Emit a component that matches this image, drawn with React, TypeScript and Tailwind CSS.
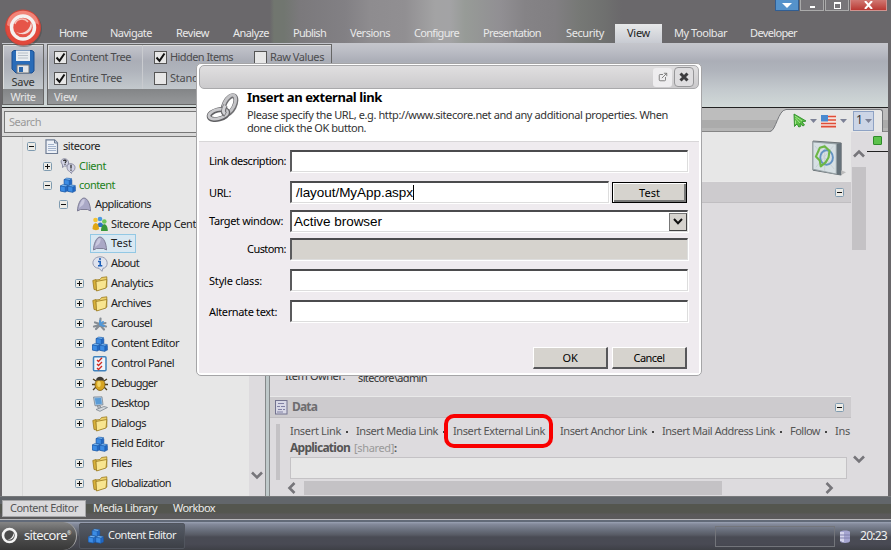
import React, { useLayoutEffect, useRef, useState } from "react";
import { ExternalLink } from "lucide-react";

/** Single line label whose tracking is adjusted so that it fills `w` pixels. */
function T({ c, w, className = "", up = true }: { c: string; w: number; className?: string; up?: boolean }) {
  const ref = useRef<HTMLSpanElement>(null);
  const [ls, setLs] = useState(0);
  useLayoutEffect(() => {
    if (ref.current) setLs((w - ref.current.getBoundingClientRect().width) / c.length);
  }, []);
  return (
    <span ref={ref} className={"shrink-0 whitespace-pre " + (up ? "-mt-px mb-px " : "") + className} style={{ letterSpacing: ls }}>
      {c}
    </span>
  );
}

function Toggle({ open = false }: { open?: boolean }) {
  return (
    <svg width="9" height="9" viewBox="0 0 9 9" className="shrink-0">
      <rect x=".5" y=".5" width="8" height="8" rx="1" fill="#ecebe6" stroke="#7f9bb0" />
      <path d={open ? "M2 4.5h5" : "M2 4.5h5M4.5 2v5"} stroke="#111" />
    </svg>
  );
}

function Cubes() {
  return (
    <g strokeWidth=".5" stroke="#1d56a0">
      {[[4.2, 0.5], [0.3, 7], [7.8, 7.3]].map(([x, y]) => (
        <g key={x} transform={`translate(${x} ${y})`}>
          <path d="M0 2 5 1 7.700 2.200V6.800L5 8 0 7Z" fill="#2168c4" />
          <path d="M0 2 2.500 .5 7.700 1.200 5 2.800Z" fill="#79b9f6" />
          <path d="M0 2 5 2.800V8L0 7Z" fill="#3c8ce4" />
        </g>
      ))}
    </g>
  );
}

function Icon({ k }: { k: string }) {
  return (
    <svg width="16" height="16" viewBox="0 0 16 16" className="shrink-0">
      {k === "doc" && (
        <g>
          <path d="M2 .8h8.500l3 3V14.500H2Z" fill="#edf1f7" stroke="#6f7d94" strokeWidth="1.200" />
          <path d="M10.500 1v3h3" fill="#c3cfe0" stroke="#6f7d94" />
          <path d="M4 5.500h6M4 7.500h8M4 9.500h8M4 11.500h8" stroke="#a3b3cc" />
        </g>
      )}
      {k === "client" && (
        <g fill="#d2d3e4" stroke="#7c7d97" strokeWidth=".8">
          <path d="M1 4c0-5 8-4 7.500 1 0 3-3 3.500-4 3L2.500 9.500V7Z" />
          <path d="M7 9c0-5 8-4 8 .5 0 3-2 4-3 4l-.5 2-2-2C8 13 7 11 7 9Z" />
          <path d="M3.500 3c.5-1.600 3-1 2.500.5L5 4.800m0 1v1M11 6.800v3.700m0 1v1.200" fill="none" stroke="#222" strokeWidth="1.200" />
        </g>
      )}
      {k === "cubes" && <Cubes />}
      {k === "app" && (
        <g>
          <path d="M1.500 14C1.500 8 4.500 1 8 1s6.500 6.500 6.500 13l-3-1.500H4.500Z" fill="#a9a8c6" stroke="#77768f" strokeWidth=".9" />
          <path d="M3 11C4 6 6 2 8 2c1 0 1 3-1 6Z" fill="#c9c8de" />
        </g>
      )}
      {k === "users" && (
        <g>
          <circle cx="8" cy="3" r="2.300" fill="#4c9ae0" />
          <path d="M5 11c0-6 6.500-6 6.500 0Z" fill="#2f75c4" />
          <circle cx="3.500" cy="4" r="2.300" fill="#f4c433" />
          <path d="M.5 13C.5 5 7 5 7 13c-1 1.500-5 1.500-6.500 0Z" fill="#e0a713" />
          <circle cx="12.300" cy="5.500" r="2.300" fill="#6cc95a" />
          <path d="M9 15c0-9 6.800-9 6.800 0Z" fill="#37983a" />
        </g>
      )}
      {k === "about" && (
        <g>
          <path d="M8 .8c9 0 9 11 3 11.500l-1 3-3-3C-1.500 12-1 1 8 .8Z" fill="#dfe3ee" stroke="#8b91a8" strokeWidth=".9" />
          <path d="M6 5.500H8.200v4M6 9.800h4.300" stroke="#1c5fb8" strokeWidth="1.600" fill="none" />
          <circle cx="8" cy="3" r="1.100" fill="#1c5fb8" />
        </g>
      )}
      {k === "folder" && (
        <g stroke="#9a7a1e" strokeWidth=".8">
          <path d="M.8 4.500 4 3.500 5 4.500V14L2 13.500Z" fill="#d9b23a" />
          <path d="M4 4 8 3.500 9.500 1.500 14.800.8V11L5 14.500Z" fill="#ecd06a" />
          <path d="M4 5.500 14.800 3.500 14 12 4.500 15Z" fill="#f8e590" />
        </g>
      )}
      {k === "carousel" && (
        <g strokeLinecap="round">
          <path d="M8.500 2.500 8 8M8 8 3 6.500M8 9l-4 4M8 9l4 4.500M8 8l5.500-1M2 10.500 8 9l6 1.500" stroke="#868d94" strokeWidth="2.200" />
          <path d="M8 8.500 11 6M8 8.500l4 1.500M8 5v3" stroke="#4f97d8" strokeWidth="2" />
        </g>
      )}
      {k === "panel" && (
        <g>
          <rect x="1.500" y=".8" width="12.500" height="14" rx="1" fill="#eef4fa" stroke="#3f82bd" strokeWidth="1.500" />
          <path d="m5 4 1.500 1.500L10 1.800M5 8l1.500 1.500L10 6M5 12l1.500 1.500L10 10" fill="none" stroke="#cf2a22" strokeWidth="1.300" />
        </g>
      )}
      {k === "bug" && (
        <g>
          <path d="M1 3l3 2M15 3l-3 2M0 8.500h16M1 14l3-3M15 14l-3-3" stroke="#4b3b18" strokeWidth="1.300" />
          <ellipse cx="8" cy="8.700" rx="5" ry="5.800" fill="#d7a422" stroke="#7c5b10" strokeWidth=".8" />
          <path d="M4 4.500C4-.5 12-.5 12 4.500Z" fill="#3e3a34" />
          <ellipse cx="7" cy="8" rx="1.800" ry="3" fill="#f3d462" />
        </g>
      )}
      {k === "desktop" && (
        <g stroke="#7d8791" strokeWidth=".8">
          <path d="M1.500 1 10 .8l1 8-8 1Z" fill="#a9c9e6" />
          <path d="M2.800 2.200 9 2l.8 5.800-5.800.8Z" fill="#5a9bd5" stroke="none" />
          <path d="m5 10 3-.5 1 2L7 13Z" fill="#b6bcc2" />
          <path d="m4 13.500 8-3 3.500 1L8 15.300Z" fill="#d4d8dc" />
        </g>
      )}
    </svg>
  );
}

type Node = [string, number, number, string, string];
// label, indent, label width, icon, state (o: open, c: closed, -: leaf)
const nodes: Node[] = [
  ["sitecore", 25, 37, "doc", "o"],
  ["Client", 41, 27, "client", "c"],
  ["content", 41, 36, "cubes", "o"],
  ["Applications", 57, 56, "app", "o"],
  ["Sitecore App Center", 73, 95, "users", "-"],
  ["Test", 73, 21, "app", "-"],
  ["About", 73, 28, "about", "-"],
  ["Analytics", 73, 42, "folder", "c"],
  ["Archives", 73, 40, "folder", "c"],
  ["Carousel", 73, 41, "carousel", "c"],
  ["Content Editor", 73, 68, "cubes", "c"],
  ["Control Panel", 73, 63, "panel", "c"],
  ["Debugger", 73, 46, "bug", "c"],
  ["Desktop", 73, 38, "desktop", "c"],
  ["Dialogs", 73, 35, "folder", "c"],
  ["Field Editor", 73, 53, "cubes", "-"],
  ["Files", 73, 21, "folder", "c"],
  ["Globalization", 73, 60, "folder", "c"],
  ["", 73, 0, "app", "-"],
];

function Tree() {
  return (
    <div className="w-[247px] shrink-0 overflow-hidden bg-[#e7e7e7] bg-[linear-gradient(90deg,transparent_20px,#d9d9d9_20px,#d9d9d9_21px,transparent_21px)]">
      {nodes.map(([label, pad, w, icon, st], i) => (
        <div
          key={i}
          className={"flex items-center text-[#222] " + (i < 5 ? "h-[19.400px]" : "h-5")}
          style={{ paddingLeft: pad }}
        >
          <span className="flex w-[15px] shrink-0">{st !== "-" && <Toggle open={st === "o"} />}</span>
          <span
            className={
              "flex h-[19px] shrink-0 items-center gap-[3px] border pr-[3px] pl-px " +
              (label === "Test" ? "border-[#93c8e4] bg-[#d9e8f2]" : "border-transparent") +
              (label === "Client" || label === "content" ? " text-[#1c8220]" : "")
            }
          >
            <Icon k={icon} />
            {label && <T c={label} w={w} />}
          </span>
        </div>
      ))}
    </div>
  );
}

function Check({ on, label, w }: { on: boolean; label: string; w: number }) {
  return (
    <div className="flex h-[13px] items-center gap-[3px]">
      <span className="flex h-[13px] w-[13px] shrink-0 border border-[#555] bg-[#e7e7e7]">
        {on && (
          <svg width="11" height="11" viewBox="0 0 11 11">
            <path d="M1.500 5.500 4.500 8.800 9.500 1.500" fill="none" stroke="#111" strokeWidth="2" />
          </svg>
        )}
      </span>
      <T c={label} w={w} className="text-[#4c4c4e]" />
    </div>
  );
}

function Chevron({ d }: { d: string }) {
  return (
    <svg width="12" height="12" viewBox="0 0 12 12" className="shrink-0">
      <path d={d} fill="none" stroke="#76757a" strokeWidth="2.600" />
    </svg>
  );
}
const DOWN = "M1 3.500 6 8.500 11 3.500";
const UP = "M1 8.500 6 3.500 11 8.500";
const LEFT = "M8.500 1 3.500 6 8.500 11";
const RIGHT = "M3.500 1 8.500 6 3.500 11";

const tabs: [string, number, number][] = [
  ["Home", 28, 23],
  ["Navigate", 42, 24],
  ["Review", 33, 24],
  ["Analyze", 36, 24],
  ["Publish", 33, 24],
  ["Versions", 40, 24],
  ["Configure", 45, 24],
  ["Presentation", 58, 25],
  ["Security", 38, 11],
];

function Header() {
  return (
    <header className="flex h-[43px] shrink-0 flex-col bg-[linear-gradient(90deg,#6a686b_0,#6a686b_270px,#71766f_274px,#717670_284px,#7b797c_300px,#828084_345px,#8e8c8f_370px,#918f92_405px,#a3a3a4_435px,#a3a3a5_450px,#979b97_465px,#918f93_500px,#858386_525px,#817f82_555px,#767875_580px,#6f706f_605px,#6a686b_622px)]">
      <div className="flex h-[11px] shrink-0 justify-end gap-px pr-[4px]">
        <span className="flex w-[24px] items-center justify-center border border-t-0 border-[#315e93] bg-[#5592ca]">
          <svg width="10" height="5"><path d="M0 0H10L5 5Z" fill="#fff" /></svg>
        </span>
        <span className="flex w-[24px] items-end justify-center border border-t-0 border-[#aaa] bg-[#777579] pb-[2px]">
          <i className="h-[2px] w-[5px] bg-white" />
        </span>
        <span className="flex w-[24px] items-center justify-center border border-t-0 border-[#aaa] bg-[#777579]">
          <i className="h-[7px] w-[7px] border border-t-2 border-white" />
        </span>
        <span className="flex w-[37px] items-center justify-center border border-t-0 border-[#d0928e] bg-gradient-to-b from-[#d07772] to-[#b93733]">
          <svg width="9" height="8"><path d="M1 0 8 8M8 0 1 8" stroke="#fff" strokeWidth="2" /></svg>
        </span>
      </div>
      <nav className="flex grow items-end pl-[59px] text-[#e9e9e9]">
        {tabs.map(([t, w, gap]) => (
          <span key={t} className="flex h-[20px] items-center" style={{ marginRight: gap }}>
            <T c={t} w={w} />
          </span>
        ))}
        <span className="flex h-[19px] w-[47px] items-center bg-gradient-to-b from-[#e7e8e9] to-[#c8cbd2] pl-[12px] text-[#222]">
          <T c="View" w={23} />
        </span>
        <span className="flex h-[20px] items-center gap-[23px] pl-[12px]">
          <T c="My Toolbar" w={53} />
          <T c="Developer" w={47} />
        </span>
      </nav>
    </header>
  );
}

function Ribbon() {
  return (
    <div className="flex h-[65px] shrink-0 gap-[3px] border-b border-[#222] bg-[linear-gradient(#c5c6cc,#bbbdc5_8px,#abaeb7_18px,#b0b4bc_28px,#c3c9cd_46px,#d1d9d8)] pt-px pb-[2px]">
      <div className="flex w-[42px] flex-col border border-[#666] shadow-[inset_1px_1px_#ddd]">
        <div className="flex grow flex-col items-center justify-end">
          <svg width="24" height="25" viewBox="0 0 24 25" className="shrink-0">
            <path d="M1 3 3 1.500H21L23 3V22L21 24H5L1 20Z" fill="#2a6cb8" stroke="#1c4f91" />
            <path d="M5 1.500H19V12H5Z" fill="#e9edf0" />
            <path d="M7 4H17M7 6.500H17M7 9H17" stroke="#b8c0c8" />
            <path d="M6 16H18V24H6Z" fill="#e2e5e8" stroke="#777" />
            <path d="M8 18h4v5H8Z" fill="#2b67ac" />
          </svg>
          <T c="Save" w={23} up={false} className="leading-[15px] text-[#333]" />
        </div>
        <div className="flex h-[15px] shrink-0 items-center justify-center bg-gradient-to-b from-[#838587] to-[#96989a] text-[#e6e6e6]">
          <T c="Write" w={25} up={false} />
        </div>
      </div>
      <div className="flex w-[285px] flex-col border border-[#666] shadow-[inset_1px_1px_#ddd]">
        <div className="flex grow pl-[6px]">
          <div className="flex w-[89px] flex-col gap-[8px] border-r border-[#c9cbcf] pt-[6px]">
            <Check on label="Content Tree" w={61} />
            <Check on label="Entire Tree" w={52} />
          </div>
          <div className="flex w-[100px] flex-col gap-[8px] pt-[6px] pl-[11px]">
            <Check on label="Hidden Items" w={63} />
            <Check on={false} label="Standard Fields" w={76} />
          </div>
          <div className="flex pt-[6px] pl-[11px]">
            <Check on={false} label="Raw Values" w={54} />
          </div>
        </div>
        <div className="flex h-[15px] shrink-0 items-center bg-gradient-to-b from-[#838587] to-[#96989a] pl-[6px] text-[#e6e6e6]">
          <T c="View" w={23} up={false} />
        </div>
      </div>
    </div>
  );
}

function SectionBar({ title }: { title?: string }) {
  return (
    <div className="flex h-[22px] shrink-0 items-center border-t border-b border-t-[#e9e9e9] border-b-[#c0bec1] bg-[#cdcbce] pr-[7px] pl-[5px]">
      {title && (
        <>
          <svg width="13" height="15" className="mr-[4px]">
            <rect x=".5" y=".5" width="11.500" height="13.500" fill="#d8d8e6" stroke="#73738f" />
            <path d="M3 3.500h6M2 6.500h3M6 6.500h4M3 9.500h4M2 12h6M8 9.500h2" stroke="#8080a4" />
          </svg>
          <T c={title} w={25} className="text-[12px] font-bold text-[#6e6d70]" />
        </>
      )}
      <span className="ml-auto flex"><Toggle open /></span>
    </div>
  );
}

const Caret = () => (
  <svg width="7" height="4" className="shrink-0"><path d="M0 0H7L3.500 4Z" fill="#7c8196" /></svg>
);

const links: [string, number][] = [
  ["Insert Link", 51],
  ["Insert Media Link", 82],
  ["Insert External Link", 92],
  ["Insert Anchor Link", 87],
  ["Insert Mail Address Link", 113],
  ["Follow", 30],
  ["Ins", 15],
];

function Editor() {
  return (
    <main className="flex w-[618px] flex-col bg-[#dddbde]">
      <div className="flex h-[24px] shrink-0 justify-end bg-[linear-gradient(#bdbdbd_0_50%,#ababab_50%_85%,#b5b5b5_85%)] shadow-[inset_0_-1px_#858585]">
        <svg width="27" height="24" className="shrink-0">
          <path d="M0 24V23.500C6 23 8 2 16 1.500H27V24Z" fill="#e7e7e7" />
          <path d="M0 23.500C6 23 8 2 16 1.500H27" fill="none" stroke="#76787c" />
        </svg>
        <div className="mt-px mr-[5px] flex w-[86px] items-center rounded-tr-[3px] border-t border-r border-[#76787c] bg-[#e7e7e7]">
          <svg width="14" height="16" viewBox="0 0 14 16" className="mr-[3px] -ml-[4px] shrink-0">
            <path d="M1 1 13 8 9 9 11.500 12 10 13 7 10.500 7.500 13.500 5.800 14 4 11 1.500 13.500Z" fill="#5bbf45" stroke="#2f8d2a" strokeWidth=".9" />
            <path d="M2 3 9 8M2.500 5 7 10M2.500 7.500V11" stroke="#a3e58c" fill="none" />
          </svg>
          <Caret />
          <svg width="16" height="13" className="mr-[3px] ml-[4px] shrink-0">
            <rect width="15" height="12.500" fill="#f4e4df" />
            <path d="M0 1.500h15M0 5h15M0 8.500h15M0 11.700h15" stroke="#df4d38" strokeWidth="1.700" />
            <rect width="7" height="6.500" fill="#4a8ad0" />
          </svg>
          <Caret />
          <span className="ml-[6px] flex h-[20px] w-[21px] shrink-0 items-center gap-[2px] border border-[#8ea2c4] bg-[#ccd5e6] pl-[2px] text-[#333]">
            <span className="-mt-[4px] text-[12px]">1</span> <Caret />
          </span>
        </div>
      </div>
      <div className="flex min-h-0 grow">
        <div className="flex w-[581px] flex-col overflow-hidden">
          <div className="flex h-[49px] shrink-0 justify-end bg-[#e7e7e7] pt-[8px] pr-[4px]">
            <svg width="35" height="38" viewBox="0 0 36 39">
              <path d="M1 1 30 3V36L1 31Z" fill="#8b949a" stroke="#6a7276" />
              <path d="m25 4 5-1V36l-5-1Z" fill="#66727a" />
              <path d="M1 2 25 4V35L1 30Z" fill="#d7e0e4" stroke="#95a0a4" />
              <path d="m3 6 20 24M22 6 4 28M13 4v28" stroke="#c6d0d5" />
              <ellipse cx="15" cy="18" rx="6.500" ry="7.500" fill="none" stroke="#6493c3" strokeWidth="2" />
              <path d="M8 8 13 6.500 18 11 17 18 14 23 9 27 8 21 4 17Z" fill="none" stroke="#6db746" strokeWidth="2.200" strokeLinejoin="round" />
              <path d="m30 31 5 2-5 3Z" fill="#bbb" />
            </svg>
          </div>
          <SectionBar />
          <div className="flex grow items-end gap-[13px] pb-[11px] pl-[15px] text-[#333]">
            <T c="Item Owner:" w={60} up={false} className="leading-[19px]" />
            <T c="sitecore\admin" w={69} up={false} className="leading-[15px]" />
          </div>
          <SectionBar title="Data" />
          <div className="flex h-[61px] shrink-0 pt-[6px] pl-[6px] text-[#555]">
            <div className="mr-[10px] h-[56px] w-[4px] shrink-0 bg-[#c4c2c5]" />
            <div className="flex flex-col">
              <div className="flex h-[15px] items-center">
                {links.map(([l, w], i) => (
                  <React.Fragment key={l}>
                    {i > 0 && (
                      <span className="flex w-[15px] shrink-0 justify-center pr-[3px]">
                        <i className="h-[2px] w-[2px] bg-[#444]" />
                      </span>
                    )}
                    <T c={l} w={w} />
                  </React.Fragment>
                ))}
              </div>
              <div className="flex h-[18px] items-center gap-[4px]">
                <T c="Application" w={60} className="text-[12px] font-bold text-[#555]" />
                <span className="-mt-px mb-px flex">
                  <T c="[shared]" w={40} up={false} className="text-[#999]" /><b>:</b>
                </span>
              </div>
              <div className="h-[22px] w-[557px] shrink-0 border border-[#c4c2c5] bg-[#e7e7e7]" />
            </div>
          </div>
          <div className="flex h-[17px] shrink-0 items-center pl-[16px]">
            <Chevron d={LEFT} />
            <div className="mr-[101px] ml-[6px] h-[14px] w-[418px] shrink-0 bg-[#c4c2c5]" />
            <Chevron d={RIGHT} />
          </div>
        </div>
        <div className="flex w-[16px] flex-col items-center pt-[16px]">
          <Chevron d={UP} />
          <div className="mt-[7px] h-[83px] w-[14px] bg-[#c4c2c5]" />
          <div className="mt-auto mb-[31px] flex"><Chevron d={DOWN} /></div>
        </div>
        <div className="flex h-[20px] w-[21px] justify-center border-b border-[#222] pt-[4px]">
          <i className="h-[9px] w-[9px] rounded-[1px] border border-[#2f8b2a] bg-[#5cc24c]" />
        </div>
      </div>
    </main>
  );
}

const FIELD = "h-[22px] shrink-0 border-t-2 border-l-2 border-r border-b border-t-[#4b4b4d] border-l-[#5b5b5d] border-r-[#ddd] border-b-[#ddd] shadow-[1px_1px_#fff] ";
const BTN = "flex h-[22px] w-[75px] shrink-0 items-center justify-center border-t border-l border-r-2 border-b-2 border-t-white border-l-white border-r-[#57575a] border-b-[#57575a] bg-[#d6d3ce] ";

type RowProps = {
  label: string;
  w: number;
  indent?: number;
  up?: boolean;
  className?: string;
  children: React.ReactNode;
};

function Row({ label, w, indent = 10, up = true, className = "", children }: RowProps) {
  return (
    <div className={"flex h-[22px] shrink-0 items-center " + className}>
      <div className="flex w-[91px] shrink-0" style={{ paddingLeft: indent }}>
        <T c={label} w={w} up={up} />
      </div>
      {children}
    </div>
  );
}

function Dialog() {
  return (
    <div className="absolute top-[63px] left-[196px] flex h-[313px] w-[506px] flex-col rounded-[5px] border border-[#a5a5a7] bg-white p-[2px] pt-px text-black">
      <div className="flex h-[24px] shrink-0 items-center justify-end gap-[2px] rounded-[5px] border border-[#a9a9ab] bg-gradient-to-b from-[#e0dfe0] to-[#cbcacc] pr-[4px]">
        <span className="flex h-[19px] w-[19px] items-center justify-center rounded-[3px] bg-[#eeedef]">
          <ExternalLink size={10} color="#777" strokeWidth={2.200} />
        </span>
        <span className="flex h-[20px] w-[20px] items-center justify-center rounded-[4px] border border-[#979799] bg-[#dedddf]">
          <svg width="10" height="10"><path d="m1.500 1.500 7 7m0-7-7 7" stroke="#3c3c3e" strokeWidth="3" /></svg>
        </span>
      </div>
      <div className="flex h-[53px] shrink-0 border-b border-[#d8d6d8] pl-[7px]">
        <svg width="33" height="33" viewBox="0 0 33 33" className="mt-[3px] shrink-0">
          <g fill="none">
            <ellipse cx="23.500" cy="13" rx="5" ry="10" transform="rotate(27 23.500 13)" stroke="#707073" strokeWidth="5" />
            <ellipse cx="23" cy="12.500" rx="5" ry="10" transform="rotate(27 23.500 13)" stroke="#c4c4c7" strokeWidth="3" />
            <ellipse cx="12.500" cy="22.500" rx="9.500" ry="4.500" transform="rotate(-14 12.500 22.500)" stroke="#606063" strokeWidth="5" />
            <ellipse cx="12.300" cy="22" rx="9.500" ry="4.500" transform="rotate(-14 12.500 22.500)" stroke="#c9c9cc" strokeWidth="2.800" />
            <path d="M19.500 13.500C17 18 17 21 19.500 22.500" stroke="#707073" strokeWidth="5" />
            <path d="M19.200 13.500C16.700 18 16.700 20.500 19 22" stroke="#d2d2d5" strokeWidth="3" />
          </g>
        </svg>
        <div className="flex flex-col pl-[8px]">
          <T c="Insert an external link" w={135} className="self-start text-[13px] leading-[19px] font-bold" />
          <div className="h-px" />
          <T c="Please specify the URL, e.g. http://www.sitecore.net and any additional properties. When" w={421} className="self-start leading-[13px] text-[#333]" />
          <T c="done click the OK button." w={119} className="self-start leading-[13px] text-[#333]" />
        </div>
      </div>
      <div className="flex grow flex-col bg-[#efebef] pt-[8px]">
        <Row label="Link description:" w={77}><div className={FIELD + "w-[398px] bg-white"} /></Row>
        <Row label="URL:" w={22} up={false} className="mt-[9px]">
          <div className={FIELD + "flex w-[319px] items-center bg-white pl-[4px] font-['Liberation_Sans'] text-[13.500px]"}>
            <T c="/layout/MyApp.aspx" w={117} up={false} />
            <i className="h-[15px] w-px bg-black" />
          </div>
          <div className="ml-[3px] flex h-[21px] w-[75px] shrink-0 items-center justify-center border border-black bg-[#d6d3ce] shadow-[inset_1px_1px_#fff,inset_-2px_-2px_#777]">
            <T c="Test" w={21} up={false} />
          </div>
        </Row>
        <Row label="Target window:" w={74} className="mt-[7px]">
          <div className={FIELD + "flex w-[398px] items-center bg-white pl-[2px] font-['Liberation_Sans'] text-[13.500px]"}>
            <T c="Active browser" w={88} up={false} />
            <span className="ml-auto flex h-[18px] w-[18px] items-center justify-center border border-[#777] border-r-[#444] border-b-[#444] bg-[#d6d3ce]">
              <svg width="10" height="7"><path d="M1 1 5 5.200 9 1" fill="none" stroke="#111" strokeWidth="2" /></svg>
            </span>
          </div>
        </Row>
        <Row label="Custom:" w={39} indent={48} className="mt-[6px]"><div className={FIELD + "w-[398px] bg-[#d6d3ce]"} /></Row>
        <Row label="Style class:" w={53} up={false} className="mt-[9px]"><div className={FIELD + "w-[398px] bg-white"} /></Row>
        <Row label="Alternate text:" w={68} up={false} className="mt-[9px]"><div className={FIELD + "w-[398px] bg-white"} /></Row>
        <div className="mt-[25px] flex justify-end gap-[4px] pr-[12px]">
          <div className={BTN}><T c="OK" w={15} up={false} /></div>
          <div className={BTN}><T c="Cancel" w={31} up={false} /></div>
        </div>
      </div>
    </div>
  );
}

function Taskbar() {
  return (
    <footer className="flex h-[28px] shrink-0 items-center bg-[linear-gradient(#9ba3b5_0,#858b9c_2px,#6a707d_8px,#575a64_13px,#494b54_15px,#494a54_22px,#3e4046)] text-[#f0f0f0]">
      <div className="flex h-full w-[77px] shrink-0 items-center gap-[6px] rounded-r-[14px] border-r border-[#aaa] bg-gradient-to-b from-[#858585] via-[#505050] to-[#383838] pl-px">
        <svg width="17" height="17" viewBox="0 0 17 17" className="-mt-[2px] shrink-0">
          <circle cx="8.500" cy="8.500" r="6.500" fill="#4b4b4b" stroke="#f3f3f3" strokeWidth="2.600" />
          <path d="M12.500 6c2 4-2 7.500-6 6.500 3 0 5.500-2.500 6-6.500Z" fill="#f3f3f3" />
        </svg>
        <T c="sitecore" w={43} className="text-[13px]" />
        <span className="-ml-[6px] mb-[6px] text-[5px]">®</span>
      </div>
      <div className="ml-[2px] flex h-[26px] w-[106px] shrink-0 items-center gap-[4px] rounded-[2px] border border-[#51555e] bg-gradient-to-b from-[#555b66] to-[#3d4047] pl-[8px]">
        <Icon k="cubes" />
        <T c="Content Editor" w={68} className="pb-px" />
      </div>
      <div className="ml-auto h-[21px] w-[120px] border border-[#73757b]" />
      <svg width="10" height="13" className="mr-[10px] ml-[5px]">
        <path d="M0 2C0 0 10 0 10 2V11C10 13.500 0 13.500 0 11Z" fill="#a5a5d0" />
        <path d="M1 2v9M3 2v10" stroke="#e4e4f4" strokeWidth="1.500" />
        <path d="M0 5h10M0 8h10" stroke="#8080ad" />
      </svg>
      <T c="20:23" w={27} className="mr-[4px] text-[12px]" />
    </footer>
  );
}

export default function App() {
  return (
    <div className="relative flex h-[550px] w-[891px] flex-col overflow-hidden bg-[#69676a] font-['Noto_Sans',sans-serif] text-[11px] leading-[15px]">
      <Header />
      <div className="flex h-[453px] shrink-0 flex-col pr-[3px] pl-[2px]">
        <Ribbon />
        <div className="flex h-[388px]">
          <aside className="flex w-[263px] shrink-0 flex-col">
            <div className="h-[29px] shrink-0 border-b border-[#777] bg-[#d9d9d9] pt-[3px] pl-[2px]">
              <div className="flex h-[22px] items-center border border-[#777] bg-[#e7e7e7] pl-[4px] text-[#999]">
                <T c="Search" w={32} />
              </div>
            </div>
            <div className="flex min-h-0 grow">
              <Tree />
              <div className="flex w-[16px] items-end justify-center bg-[#dddbde] pb-[15px]"><Chevron d={DOWN} /></div>
            </div>
          </aside>
          <div className="w-[5px] shrink-0 border-x border-[#85898a] bg-[#bfc9ca]" />
          <Editor />
        </div>
      </div>
      <div className="flex h-[24px] shrink-0 items-center border-t border-b border-t-[#77797b] border-b-[#b9b9bc] bg-[linear-gradient(#62666b_0_30%,#54564f_32%_70%,#5b5a5b_80%)] pl-[2px] text-[#ececec]">
        <span className="flex h-[17px] w-[84px] items-center border border-[#a7a7a9] bg-[#dad9db] pl-[7px] text-[#555]">
          <T c="Content Editor" w={68} />
        </span>
        <T c="Media Library" w={64} className="ml-[7px]" />
        <T c="Workbox" w={42} className="ml-[16px]" />
      </div>
      <div className="h-[2px] shrink-0 bg-[#626a78]" />
      <Taskbar />
      <svg width="40" height="40" viewBox="0 0 40 40" className="absolute top-[8px] left-[3px]">
        <circle cx="21" cy="21" r="18" fill="#444" opacity=".45" />
        <circle cx="20" cy="19.500" r="17.500" fill="#e2483b" stroke="#c9463b" />
        <path d="M4 17C5-2 35-2 36 17 29 10 13 24 4 17Z" fill="#f28478" />
        <circle cx="20" cy="19.500" r="11.500" fill="#e65549" stroke="#f5f1f0" strokeWidth="3.500" />
        <path d="M28 14c4 9-6 16-15 10 8 3 14-2 15-10Z" fill="#f4d9d5" />
        <path d="M12 16c1-5 9-7 13-2" fill="none" stroke="#f4bcb5" strokeWidth="1.500" />
      </svg>
      <div className="absolute top-[414px] left-[444px] h-[34px] w-[109px] rounded-[10px] border-4 border-[#f90000]" />
      <Dialog />
    </div>
  );
}
